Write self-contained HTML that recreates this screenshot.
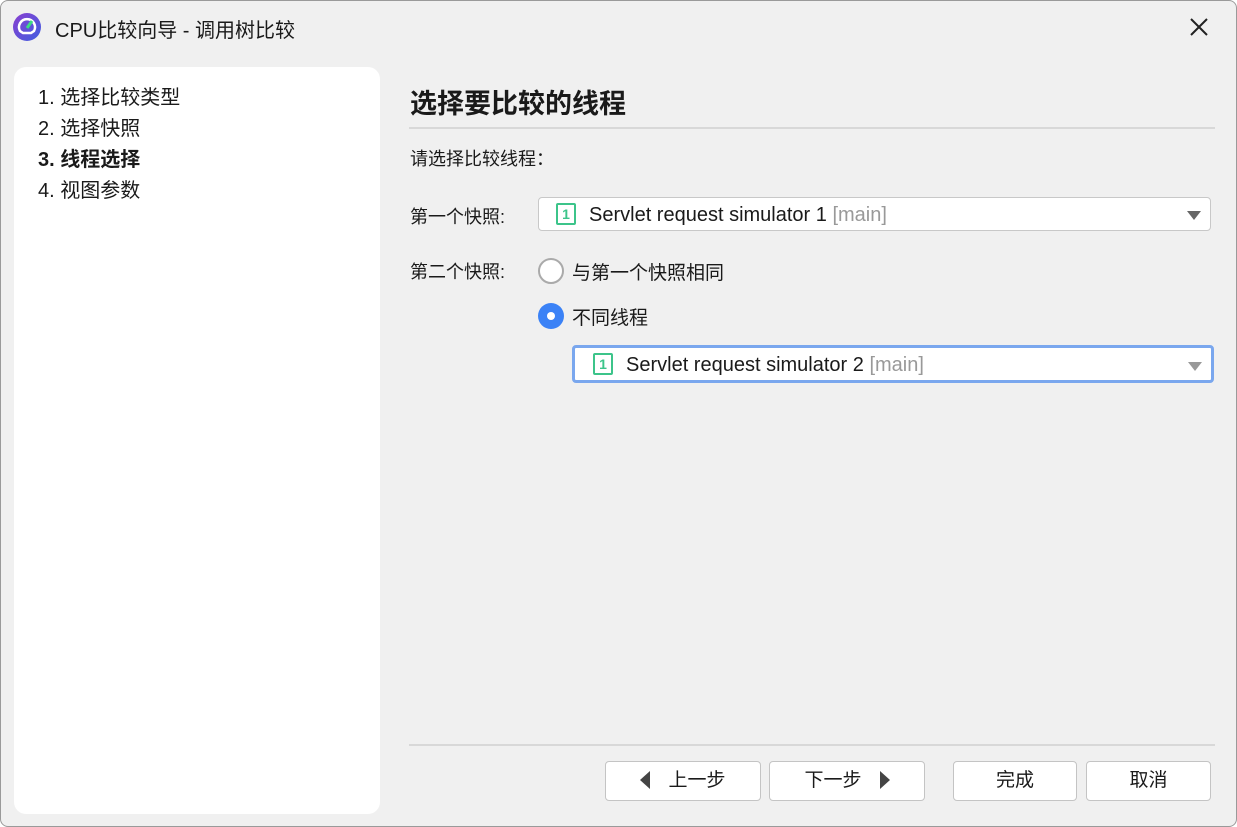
<!DOCTYPE html>
<html><head><meta charset="utf-8"><style>
*{box-sizing:border-box;margin:0;padding:0}
body{width:1237px;height:827px;background:#fff;font-family:"Liberation Sans","Noto Sans CJK SC",sans-serif;color:#1a1a1a;position:relative;overflow:hidden}
.win{position:absolute;left:0;top:0;width:1237px;height:827px;background:#f0f0f0;border:1px solid #9a9a9a;border-radius:8px}
.a{position:absolute;white-space:nowrap}
.combo{position:absolute;background:#fff;border:1px solid #c8c8c8;border-radius:4px}
.combo .t{position:absolute;font-size:20px;top:6px}
.icon{position:absolute;width:20px;height:22px;border:2px solid #3cc48a;border-radius:2px;color:#3cc48a;font-size:14px;font-weight:bold;text-align:center;line-height:18px}
.arrow{position:absolute;width:0;height:0;border-left:7px solid transparent;border-right:7px solid transparent;border-top:9px solid #666}
.btn{position:absolute;top:761px;height:40px;background:#fff;border:1px solid #c4c4c4;border-radius:4px;font-size:19px;text-align:center;line-height:38px}
</style></head><body>
<div class="win"></div>
<svg class="a" style="left:12px;top:12px" width="30" height="30" viewBox="0 0 30 30"><defs><linearGradient id="g" x1="0" y1="0" x2="1" y2="1"><stop offset="0" stop-color="#8a3fd0"/><stop offset="1" stop-color="#3f5ee0"/></linearGradient></defs><circle cx="15" cy="15" r="14" fill="url(#g)"/><path d="M8 19 A8 8 0 1 1 22 19 L19 21 L11 21 Z" fill="none" stroke="#fff" stroke-width="2.5"/><path d="M15 16 L20 9" stroke="#3ddc84" stroke-width="3"/></svg>
<div class="a" style="left:55px;top:14px;font-size:20px">CPU比较向导 - 调用树比较</div>
<svg class="a" style="left:1189px;top:17px" width="20" height="20"><path d="M2 2L18 18M18 2L2 18" stroke="#222" stroke-width="2"/></svg>
<div class="a" style="left:14px;top:67px;width:366px;height:747px;background:#fff;border-radius:12px"></div>
<div class="a" style="left:38px;top:83px;font-size:20px;line-height:31px">1. 选择比较类型<br>2. 选择快照<br><b>3. 线程选择</b><br>4. 视图参数</div>
<div class="a" style="left:410px;top:82px;font-size:27px;font-weight:bold">选择要比较的线程</div>
<div class="a" style="left:409px;top:127px;width:806px;height:2px;background:#d8d8d8"></div>
<div class="a" style="left:410px;top:145px;font-size:18px">请选择比较线程：</div>
<div class="a" style="left:410px;top:203px;font-size:18px">第一个快照:</div>
<div class="combo" style="left:538px;top:197px;width:673px;height:34px"><div class="icon" style="left:17px;top:5px">1</div><div class="t" style="left:50px">Servlet request simulator 1 <span style="color:#999">[main]</span></div><div class="arrow" style="right:9px;top:13px"></div></div>
<div class="a" style="left:410px;top:258px;font-size:18px">第二个快照:</div>
<div class="a" style="left:538px;top:258px;width:26px;height:26px;border:2px solid #aaa;border-radius:50%;background:#fff"></div>
<div class="a" style="left:572px;top:258px;font-size:19px">与第一个快照相同</div>
<div class="a" style="left:538px;top:303px;width:26px;height:26px;border-radius:50%;background:#3b82f6"></div>
<div class="a" style="left:547px;top:312px;width:8px;height:8px;border-radius:50%;background:#fff"></div>
<div class="a" style="left:572px;top:303px;font-size:19px">不同线程</div>
<div class="combo" style="left:572px;top:345px;width:642px;height:38px;border:3px solid #7aa7ee"><div class="icon" style="left:18px;top:5px">1</div><div class="t" style="left:51px;top:6px">Servlet request simulator 2 <span style="color:#999">[main]</span></div><div class="arrow" style="right:9px;top:14px;border-top-color:#999"></div></div>
<div class="a" style="left:409px;top:744px;width:806px;height:2px;background:#d8d8d8"></div>
<div class="btn" style="left:605px;width:156px"><span style="display:inline-block;width:0;height:0;border-top:9px solid transparent;border-bottom:9px solid transparent;border-right:10px solid #444;vertical-align:-3px;margin-right:18px"></span>上一步</div>
<div class="btn" style="left:769px;width:156px">下一步<span style="display:inline-block;width:0;height:0;border-top:9px solid transparent;border-bottom:9px solid transparent;border-left:10px solid #444;vertical-align:-3px;margin-left:18px"></span></div>
<div class="btn" style="left:953px;width:124px">完成</div>
<div class="btn" style="left:1086px;width:125px">取消</div>
</body></html>
